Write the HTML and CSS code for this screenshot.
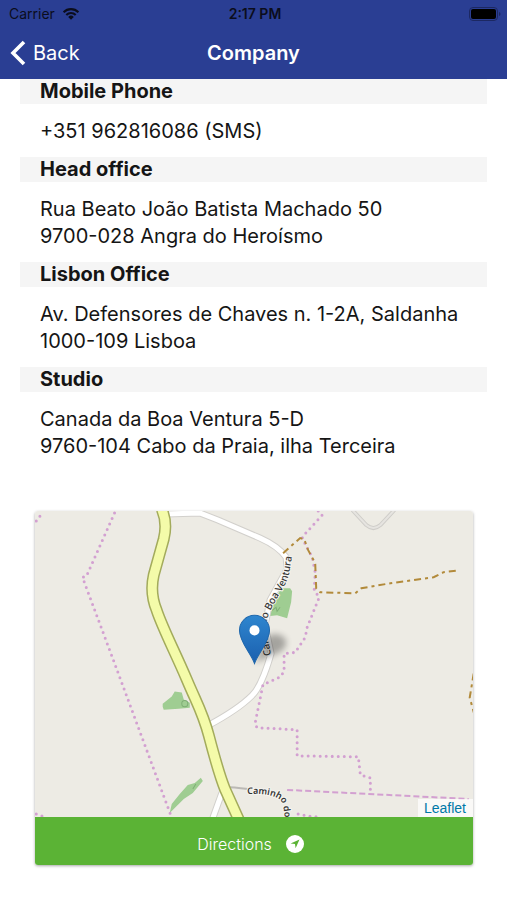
FILE: index.html
```html
<!DOCTYPE html>
<html lang="en">
<head>
    <meta charset="UTF-8">
    <meta name="viewport" content="width=device-width, initial-scale=1.0">
    <title>Company</title>
    <link rel="stylesheet" href="styles.css">
</head>
<body>
    <header class="header">
        <div class="status-bar">
            <div class="carrier">
                <span>Carrier</span>
                <svg class="wifi" viewBox="0 0 18 13" aria-hidden="true">
                    <path d="M1.6 5.2a10.5 10.5 0 0 1 14.8 0M4.3 8a6.6 6.6 0 0 1 9.4 0" fill="none" stroke="#0b0d1c" stroke-width="2.1"/>
                    <path d="M9 12.8 6.2 9.9a4 4 0 0 1 5.6 0z" fill="#0b0d1c"/>
                </svg>
            </div>
            <span class="time">2:17 PM</span>
            <svg class="battery" viewBox="0 0 32 14" aria-hidden="true">
                <rect x="0.5" y="0.5" width="28" height="13" rx="3.5" fill="none" stroke="#1c2862"/>
                <rect x="2" y="2" width="25" height="10" rx="2" fill="#000"/>
                <path d="M30 5v4q1.500-.5 1.500-2t-1.500-2z" fill="#1c2862"/>
            </svg>
        </div>
        <nav class="navbar">
            <a class="back" href="#">
                <svg class="chevron" viewBox="0 0 16 26" aria-hidden="true">
                    <path d="M14 2 3 13l11 11" fill="none" stroke="#fff" stroke-width="3.6"/>
                </svg>
                <span>Back</span>
            </a>
            <h1>Company</h1>
        </nav>
    </header>

    <main>
        <section class="contacts">
            <h2>Mobile Phone</h2>
            <p>+351 962816086 (SMS)</p>
            <h2>Head office</h2>
            <p>Rua Beato João Batista Machado 50<br>9700-028 Angra do Heroísmo</p>
            <h2>Lisbon Office</h2>
            <p>Av. Defensores de Chaves n. 1-2A, Saldanha<br>1000-109 Lisboa</p>
            <h2>Studio</h2>
            <p>Canada da Boa Ventura 5-D<br>9760-104 Cabo da Praia, ilha Terceira</p>
        </section>

        <section class="card">
            <div class="map">
                <svg class="map-tiles" viewBox="0 0 438 305" preserveAspectRatio="xMidYMid slice" role="img" aria-label="Map">
                    <defs>
                        <path id="road-ventura" d="M236 144C233 126 229 114 234 102C240 88 251 76 254 62L258 40"/>
                        <path id="road-caminho" d="M212 282Q238 281 246 289Q250 293 250 325"/>
                        <linearGradient id="pin-fill" x1="0" y1="0" x2="0" y2="1">
                            <stop offset="0" stop-color="#2e86cf"/>
                            <stop offset="1" stop-color="#1b5fae"/>
                        </linearGradient>
                        <filter id="soft" x="-50%" y="-50%" width="200%" height="200%">
                            <feGaussianBlur stdDeviation="3"/>
                        </filter>
                    </defs>

                    <!-- woods -->
                    <g fill="#9fcd92">
                        <path d="M246 77h9l2 3-1 11-4 16-10-3-9 1 4-11z"/>
                        <path d="M128 192l9-7 3-5 7 1 2 7 6 3v5l-11 1-15 1-1-3z"/>
                        <path d="M135 301l2-9 8-10 8-9 7-2 6-5 2 3-5 6-5 6-9 6z"/>
                    </g>
                    <g fill="none" stroke="#7fae75">
                        <circle cx="150" cy="192" r="3"/>
                        <path d="M158 277l3-5M237 99l4-3 1 4 3-4"/>
                    </g>

                    <!-- roads -->
                    <g fill="none" stroke-linejoin="round">
                        <path class="lane-edge" d="M317-1l14 15q7 6 14 0l14-15"/>
                        <path class="lane" d="M317-1l14 15q7 6 14 0l14-15"/>
                        <path class="street-edge" d="M131 3l34-1 18 7 42 18q18 8 26 19l1 12-17 31-5 25 6 28q-9 32-19 42-14 14-44 30M187 281l-9 25"/>
                        <path class="street" d="M131 3l34-1 18 7 42 18q18 8 26 19l1 12-17 31-5 25 6 28q-9 32-19 42-14 14-44 30M187 281l-9 25"/>
                        <path d="M190 275q8 0 23 2" stroke="#bbb9b5" stroke-width="2"/>
                        <path class="main-edge" d="M127-2Q133 12 129 28L119 64Q115 82 122 99C128 117 141 142 152 168S168 201 174 224S184 262 190 277L204 308"/>
                        <path class="main-road" d="M127-2Q133 12 129 28L119 64Q115 82 122 99C128 117 141 142 152 168S168 201 174 224S184 262 190 277L204 308"/>
                    </g>

                    <!-- boundaries -->
                    <g class="boundary">
                        <path d="M80 2L52 65l-4 1L79 149l57 154"/>
                        <path d="M2 10l6-8M2 302l11 4M263 302l10 2 12 1M283 0l4 4-20 22 4 9 6 11 3 15-1 18 5 7-12 30-2 10-10 15-11 1v17l-3 6-18 8-8 39 2 4 40 2v26l61 1 2 18 10 3v14"/>
                    </g>
                    <path class="border-dash" d="M252 278l181 9"/>

                    <!-- tracks -->
                    <path class="track" d="M248 42l17-15 4 1 4 11 7 13 1 25 4 4 35 1 6-5 29-5 43-6 10-5 16-2"/>
                    <path class="track" d="M438 162l-4 24 5 18"/>

                    <text class="road-name"><textPath href="#road-ventura">Caminho Boa Ventura</textPath></text>
                    <text class="road-name road-name-small"><textPath href="#road-caminho">Caminho do M</textPath></text>

                    <!-- marker -->
                    <path d="M220 151l10-24q10-9 20 0 4 8-6 14z" fill="#000" opacity="0.3" filter="url(#soft)"/>
                    <path d="M219.500 152C216 142 204.500 130 204.500 119a15 15 0 0 1 30 0C234.500 130 223 142 219.500 152z" fill="url(#pin-fill)" stroke="#2169ad"/>
                    <circle cx="219.500" cy="119" r="5" fill="#fff"/>
                </svg>
                <a class="attribution" href="#">Leaflet</a>
            </div>
            <button class="directions" type="button">
                <span>Directions</span>
                <svg class="navigate" viewBox="0 0 18 18" aria-hidden="true">
                    <circle cx="9" cy="9" r="9" fill="#fff"/>
                    <path d="M13.500 4.500 9.600 13.300 9 9 4.600 8.600z" fill="#5bb335"/>
                </svg>
            </button>
        </section>
    </main>
</body>
</html>
```
FILE: styles.css
```css
body {
    font-family: Inter, "Noto Sans", sans-serif;
    margin: 0;
    background-color: #fff;
    color: #151515;
}

.header {
    position: sticky;
    top: 0;
    z-index: 10;
    background-color: #2a3e93;
}

.status-bar {
    display: grid;
    grid-template-columns: 1fr auto 1fr;
    align-items: center;
    height: 27px;
    padding: 0 6px 0 9px;
    font-size: 14px;
    color: #0b0d1c;
}

.carrier {
    display: flex;
    align-items: center;
    gap: 7px;
}

.wifi {
    width: 18px;
    height: 13px;
}

.time {
    font-size: 14px;
    font-weight: 600;
}

.battery {
    width: 32px;
    height: 14px;
    justify-self: end;
}

.navbar {
    display: grid;
    grid-template-columns: 1fr auto 1fr;
    align-items: center;
    height: 52px;
    padding: 0 10px;
    color: #fff;
}

.back {
    display: flex;
    align-items: center;
    gap: 7px;
    font-size: 20px;
    color: #fff;
    text-decoration: none;
}

.chevron {
    width: 16px;
    height: 26px;
}

.navbar h1 {
    margin: 0;
    font-size: 20px;
    font-weight: 600;
}

.contacts {
    margin: 0 20px;
    font-size: 20px;
}

.contacts h2 {
    margin: 0;
    padding: 0 20px;
    font-size: 20px;
    font-weight: 700;
    line-height: 25px;
    background-color: #f5f5f5;
}

.contacts p {
    margin: 0;
    padding: 14px 20px 12px;
    line-height: 27px;
}

.card {
    margin: 39px 34px 32px 35px;
    border-radius: 3px;
    overflow: hidden;
    box-shadow: 0 1px 3px rgba(0, 0, 0, 0.35);
}

.map {
    position: relative;
    height: 306px;
    background-color: #edebe4;
}

.map-tiles {
    display: block;
    width: 100%;
    height: 100%;
}

.lane-edge {
    stroke: #cfcdc9;
    stroke-width: 4;
}

.lane {
    stroke: #e6e4e0;
    stroke-width: 2;
}

.street-edge {
    stroke: #d2d0cc;
    stroke-width: 7;
}

.street {
    stroke: #fff;
    stroke-width: 5;
}

.main-edge {
    stroke: #a3ab5c;
    stroke-width: 12;
}

.main-road {
    stroke: #f4fba9;
    stroke-width: 9;
}

.boundary {
    fill: none;
    stroke: #d3a0d1;
    stroke-width: 3;
    stroke-linecap: round;
    stroke-dasharray: 0 6;
}

.border-dash {
    fill: none;
    stroke: #d3a0d1;
    stroke-width: 2;
    stroke-dasharray: 6 3;
}

.track {
    fill: none;
    stroke: #b28a3a;
    stroke-width: 2;
    stroke-dasharray: 7 4 3 4;
}

.road-name {
    font-family: "Noto Sans", sans-serif;
    font-size: 10px;
    font-weight: 500;
    fill: #333;
    stroke: #f5f4f0;
    stroke-width: 2;
    paint-order: stroke;
}

.road-name-small {
    font-size: 9px;
    font-weight: 600;
}

.attribution {
    position: absolute;
    right: 0;
    bottom: 0;
    padding: 0 7px 0 6px;
    font-family: "Liberation Sans", Arial, sans-serif;
    font-size: 14px;
    line-height: 18px;
    color: #0078a8;
    text-decoration: none;
    background-color: rgba(255, 255, 255, 0.7);
}

.directions {
    display: flex;
    align-items: center;
    justify-content: center;
    gap: 14px;
    width: 100%;
    height: 48px;
    padding: 6px 7px 0 0;
    border: 0;
    font-family: inherit;
    font-size: 16px;
    font-weight: 300;
    color: #fff;
    background-color: #5bb335;
    cursor: pointer;
}

.navigate {
    width: 18px;
    height: 18px;
}
```
